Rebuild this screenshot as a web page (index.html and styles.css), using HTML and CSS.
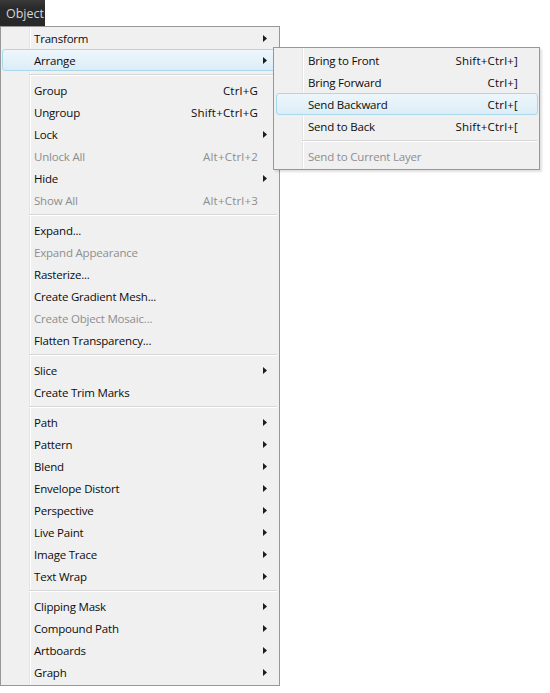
FILE: index.html
```html
<!DOCTYPE html>
<html>
<head>
<meta charset="utf-8">
<link rel="stylesheet" href="styles.css">
</head>
<body>
<div class="screen">
  <div class="menubar"><span class="menubar-item">Object</span></div>
  <div class="menu main">
    <div class="row"><span class="label">Transform</span><span class="key"></span><span class="arrow"><svg width="4" height="7" viewBox="0 0 4 7"><polygon points="0,0 4,3.5 0,7" /></svg></span></div>
    <div class="row hl"><span class="label">Arrange</span><span class="key"></span><span class="arrow"><svg width="4" height="7" viewBox="0 0 4 7"><polygon points="0,0 4,3.5 0,7" /></svg></span></div>
    <div class="sep"></div>
    <div class="row"><span class="label">Group</span><span class="key">Ctrl+G</span><span class="arrow"></span></div>
    <div class="row"><span class="label">Ungroup</span><span class="key">Shift+Ctrl+G</span><span class="arrow"></span></div>
    <div class="row"><span class="label">Lock</span><span class="key"></span><span class="arrow"><svg width="4" height="7" viewBox="0 0 4 7"><polygon points="0,0 4,3.5 0,7" /></svg></span></div>
    <div class="row dis"><span class="label">Unlock All</span><span class="key">Alt+Ctrl+2</span><span class="arrow"></span></div>
    <div class="row"><span class="label">Hide</span><span class="key"></span><span class="arrow"><svg width="4" height="7" viewBox="0 0 4 7"><polygon points="0,0 4,3.5 0,7" /></svg></span></div>
    <div class="row dis"><span class="label">Show All</span><span class="key">Alt+Ctrl+3</span><span class="arrow"></span></div>
    <div class="sep"></div>
    <div class="row"><span class="label">Expand...</span><span class="key"></span><span class="arrow"></span></div>
    <div class="row dis"><span class="label">Expand Appearance</span><span class="key"></span><span class="arrow"></span></div>
    <div class="row"><span class="label">Rasterize...</span><span class="key"></span><span class="arrow"></span></div>
    <div class="row"><span class="label">Create Gradient Mesh...</span><span class="key"></span><span class="arrow"></span></div>
    <div class="row dis"><span class="label">Create Object Mosaic...</span><span class="key"></span><span class="arrow"></span></div>
    <div class="row"><span class="label">Flatten Transparency...</span><span class="key"></span><span class="arrow"></span></div>
    <div class="sep"></div>
    <div class="row"><span class="label">Slice</span><span class="key"></span><span class="arrow"><svg width="4" height="7" viewBox="0 0 4 7"><polygon points="0,0 4,3.5 0,7" /></svg></span></div>
    <div class="row"><span class="label">Create Trim Marks</span><span class="key"></span><span class="arrow"></span></div>
    <div class="sep"></div>
    <div class="row"><span class="label">Path</span><span class="key"></span><span class="arrow"><svg width="4" height="7" viewBox="0 0 4 7"><polygon points="0,0 4,3.5 0,7" /></svg></span></div>
    <div class="row"><span class="label">Pattern</span><span class="key"></span><span class="arrow"><svg width="4" height="7" viewBox="0 0 4 7"><polygon points="0,0 4,3.5 0,7" /></svg></span></div>
    <div class="row"><span class="label">Blend</span><span class="key"></span><span class="arrow"><svg width="4" height="7" viewBox="0 0 4 7"><polygon points="0,0 4,3.5 0,7" /></svg></span></div>
    <div class="row"><span class="label">Envelope Distort</span><span class="key"></span><span class="arrow"><svg width="4" height="7" viewBox="0 0 4 7"><polygon points="0,0 4,3.5 0,7" /></svg></span></div>
    <div class="row"><span class="label">Perspective</span><span class="key"></span><span class="arrow"><svg width="4" height="7" viewBox="0 0 4 7"><polygon points="0,0 4,3.5 0,7" /></svg></span></div>
    <div class="row"><span class="label">Live Paint</span><span class="key"></span><span class="arrow"><svg width="4" height="7" viewBox="0 0 4 7"><polygon points="0,0 4,3.5 0,7" /></svg></span></div>
    <div class="row"><span class="label">Image Trace</span><span class="key"></span><span class="arrow"><svg width="4" height="7" viewBox="0 0 4 7"><polygon points="0,0 4,3.5 0,7" /></svg></span></div>
    <div class="row"><span class="label">Text Wrap</span><span class="key"></span><span class="arrow"><svg width="4" height="7" viewBox="0 0 4 7"><polygon points="0,0 4,3.5 0,7" /></svg></span></div>
    <div class="sep"></div>
    <div class="row"><span class="label">Clipping Mask</span><span class="key"></span><span class="arrow"><svg width="4" height="7" viewBox="0 0 4 7"><polygon points="0,0 4,3.5 0,7" /></svg></span></div>
    <div class="row"><span class="label">Compound Path</span><span class="key"></span><span class="arrow"><svg width="4" height="7" viewBox="0 0 4 7"><polygon points="0,0 4,3.5 0,7" /></svg></span></div>
    <div class="row"><span class="label">Artboards</span><span class="key"></span><span class="arrow"><svg width="4" height="7" viewBox="0 0 4 7"><polygon points="0,0 4,3.5 0,7" /></svg></span></div>
    <div class="row"><span class="label">Graph</span><span class="key"></span><span class="arrow"><svg width="4" height="7" viewBox="0 0 4 7"><polygon points="0,0 4,3.5 0,7" /></svg></span></div>
  </div>
  <div class="menu sub">
    <div class="row"><span class="label">Bring to Front</span><span class="key">Shift+Ctrl+]</span><span class="arrow"></span></div>
    <div class="row"><span class="label">Bring Forward</span><span class="key">Ctrl+]</span><span class="arrow"></span></div>
    <div class="row hl"><span class="label">Send Backward</span><span class="key">Ctrl+[</span><span class="arrow"></span></div>
    <div class="row"><span class="label">Send to Back</span><span class="key">Shift+Ctrl+[</span><span class="arrow"></span></div>
    <div class="sep"></div>
    <div class="row dis"><span class="label">Send to Current Layer</span><span class="key"></span><span class="arrow"></span></div>
  </div>
</div>
</body>
</html>
```

FILE: styles.css
```css
* { box-sizing: border-box; }
html, body { margin: 0; padding: 0; background: #ffffff; }
body {
  font-family: "Open Sans", "Noto Sans", sans-serif;
  font-size: 11.5px;
  letter-spacing: -0.2px;
  color: #0c0c0c;
}
.screen { position: relative; width: 550px; height: 693px; overflow: hidden; }
.menubar { height: 26px; display: flex; }
.menubar-item {
  display: flex;
  align-items: center;
  height: 26px;
  width: 45px;
  padding-left: 6px;
  background: linear-gradient(#3a3a3a, #2a2a2a 30%, #282828);
  color: #d6d6d6;
  font-size: 12.5px;
  letter-spacing: 0;
}
.menu {
  background-color: #f0f0f0;
  border: 1px solid #979797;
}
.main {
  width: 280px;
  padding: 0 0 2px;
  background-image: linear-gradient(to right, transparent 28px, #e2e3e3 28px, #e2e3e3 29px, #ffffff 29px, #ffffff 30px, transparent 30px);
}
.sub {
  position: absolute;
  left: 273px;
  top: 47px;
  width: 267px;
  padding: 1px 0 2px;
  background-image: linear-gradient(to right, transparent 28px, #e2e3e3 28px, #e2e3e3 29px, #ffffff 29px, #ffffff 30px, transparent 30px);
  box-shadow: 2px 2px 2px rgba(0,0,0,0.12);
}
.row {
  display: flex;
  align-items: center;
  height: 22px;
  margin: 0 1px;
  padding-left: 31px;
  border: 1px solid transparent;
  border-radius: 3px;
  white-space: nowrap;
}
.sub .row { margin: 0 1px 0 2px; }
.row .label { flex: 1; }
.row .key { text-align: right; letter-spacing: 0.2px; }
.row .arrow {
  width: 19px;
  display: flex;
  align-items: center;
  padding-left: 5px;
}
.row .arrow svg { fill: #1c1c1c; display: block; }
.row.dis { color: #8e8e8e; }
.row.hl {
  border-color: #a9d8ea;
  background: linear-gradient(#edf6fb, #dcedf7);
}
.sep {
  height: 8px;
  margin-left: 28px;
  margin-right: 2px;
  padding-top: 3px;
}
.sep::before {
  content: "";
  display: block;
  height: 1px;
  background: #d7d7d7;
  border-bottom: 1px solid #ffffff;
  box-sizing: content-box;
}
```
